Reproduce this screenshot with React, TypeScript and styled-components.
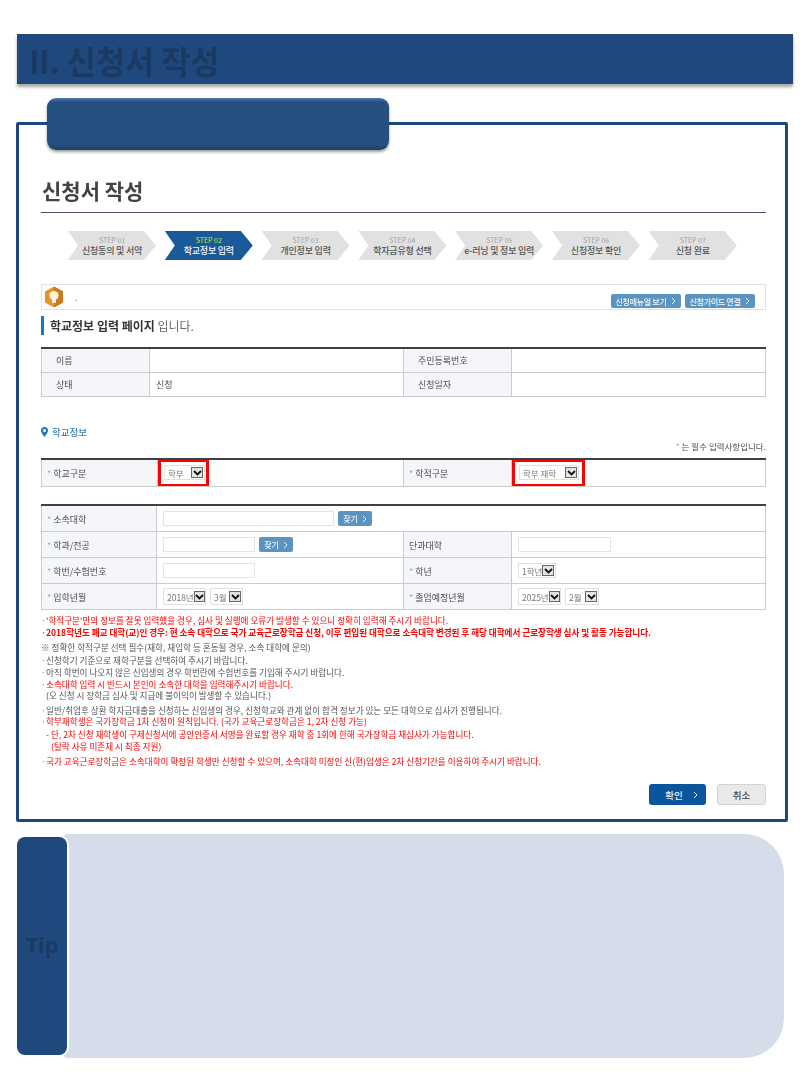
import styled, { createGlobalStyle } from 'styled-components';

const colors = {
  navy: '#1f497d',
  navyText: '#1a3a63',
  pill: '#25507f',
  rule: '#4d4a6b',
  line: '#cccccc',
  headerLine: '#3f4045',
  labelBg: '#f5f6f9',
  text: '#4d4d4d',
  red: '#ff0000',
  link: '#5a94c3',
};

const GlobalStyle = createGlobalStyle`
  html, body {
    margin: 0;
    padding: 0;
    background: #fff;
    font-family: "Noto Sans CJK KR", "Noto Sans", sans-serif;
    color: ${colors.text};
  }
`;

const steps = [
  { no: 'STEP 01', label: '신청동의 및 서약' },
  { no: 'STEP 02', label: '학교정보 입력', active: true },
  { no: 'STEP 03', label: '개인정보 입력' },
  { no: 'STEP 04', label: '학자금유형 선택' },
  { no: 'STEP 05', label: 'e-러닝 및 정보 입력' },
  { no: 'STEP 06', label: '신청정보 확인' },
  { no: 'STEP 07', label: '신청 완료' },
];

type NoteItem = { text: string; tone?: 'dark' | 'red' | 'bold'; top: number; indent?: number; dot?: boolean };

const notes: NoteItem[] = [
  { text: "'학적구분'만의 정보를 잘못 입력했을 경우, 심사 및 실행에 오류가 발생할 수 있으니 정확히 입력해 주시기 바랍니다.", tone: 'red', top: 0, dot: true },
  { text: '2018학년도 폐교 대학(교)인 경우: 현 소속 대학으로 국가 교육근로장학금 신청, 이후 편입된 대학으로 소속대학 변경된 후 해당 대학에서 근로장학생 심사 및 활동 가능합니다.', tone: 'bold', top: 0, dot: true },
  { text: '※ 정확한 학적구분 선택 필수(재학, 재입학 등 혼동될 경우, 소속 대학에 문의)', top: 3, indent: -5 },
  { text: '신청학기 기준으로 재학구분을 선택하여 주시기 바랍니다.', top: 1, dot: true },
  { text: '아직 학번이 나오지 않은 신입생의 경우 학번란에 수험번호를 기입해 주시기 바랍니다.', top: 0, dot: true },
  { text: '소속대학 입력 시 반드시 본인이 소속한 대학을 입력해주시기 바랍니다.', tone: 'red', top: 0, dot: true },
  { text: '(오 신청 시 장학금 심사 및 지급에 불이익이 발생할 수 있습니다.)', top: -1 },
  { text: '일반/취업후 상환 학자금대출을 신청하는 신입생의 경우, 신청학교와 관계 없이 합격 정보가 있는 모든 대학으로 심사가 진행됩니다.', top: 3, dot: true },
  { text: '학부재학생은 국가장학금 1차 신청이 원칙입니다. (국가 교육근로장학금은 1, 2차 신청 가능)', tone: 'red', top: -1, dot: true },
  { text: '- 단, 2차 신청 재학생이 구제신청서에 공인인증서 서명을 완료할 경우 재학 중 1회에 한해 국가장학금 재심사가 가능합니다.', tone: 'red', top: 1 },
  { text: '(탈락 사유 미존재 시 최종 지원)', tone: 'red', top: 0, indent: 5 },
  { text: '국가 교육근로장학금은 소속대학이 확정된 학생만 신청할 수 있으며, 소속대학 미정인 신(편)입생은 2차 신청기간을 이용하여 주시기 바랍니다.', tone: 'red', top: 3, dot: true },
];

function Select({ label, width, tall }: { label: string; width: number; tall?: boolean }) {
  return (
    <SelectBox $width={width} $tall={tall}>
      <span>{label}</span>
      <SelectArrow>
        <svg width="9" height="6" viewBox="0 0 9 6">
          <path d="M1 1l3.5 3.5L8 1" fill="none" stroke="#111" strokeWidth="1.8" />
        </svg>
      </SelectArrow>
    </SelectBox>
  );
}

function FindButton({ label }: { label: string }) {
  return (
    <SmallButton>
      {label}
      <Chevron />
    </SmallButton>
  );
}

function Chevron() {
  return (
    <svg width="5" height="8" viewBox="0 0 5 8">
      <path d="M1 1l3 3-3 3" fill="none" stroke="currentColor" strokeWidth="1" />
    </svg>
  );
}

export default function App() {
  return (
    <Page>
      <GlobalStyle />
      <HeaderBar>II. 신청서 작성</HeaderBar>
      <Pill />
      <Panel>
        <PageTitle>신청서 작성</PageTitle>
        <Steps>
          {steps.map((s) => (
            <Step key={s.no} $active={s.active}>
              <StepNo $active={s.active}>{s.no}</StepNo>
              <StepLabel $active={s.active}>{s.label}</StepLabel>
            </Step>
          ))}
        </Steps>

        <NoticeBox>
          <svg width="20" height="22" viewBox="0 0 20 22">
            <path d="M10 0.5l9 5v11l-9 5-9-5v-11z" fill="#e8922a" />
            <path d="M10 0.5l9 5v11l-9 5z" fill="#c9791f" />
            <circle cx="10" cy="9.5" r="4.6" fill="#fff3da" />
            <rect x="8" y="13" width="4" height="4" fill="#fff3da" />
          </svg>
          <NoticeDot>.</NoticeDot>
          <NoticeLinks>
            <NoticeButton>
              신청매뉴얼 보기
              <Chevron />
            </NoticeButton>
            <NoticeButton>
              신청가이드 연결
              <Chevron />
            </NoticeButton>
          </NoticeLinks>
        </NoticeBox>

        <SectionHeading>
          <b>학교정보 입력 페이지</b> 입니다.
        </SectionHeading>

        <InfoTable>
          <colgroup>
            <col width="108" />
            <col width="254" />
            <col width="108" />
            <col />
          </colgroup>
          <tbody>
            <tr>
              <th>이름</th>
              <td />
              <th>주민등록번호</th>
              <td />
            </tr>
            <tr>
              <th>상태</th>
              <td>신청</td>
              <th>신청일자</th>
              <td />
            </tr>
          </tbody>
        </InfoTable>

        <SubHeading>
          <svg width="7" height="10" viewBox="0 0 7 10">
            <path d="M3.5 0a3.5 3.5 0 0 1 3.5 3.5C7 6 3.5 10 3.5 10S0 6 0 3.5A3.5 3.5 0 0 1 3.5 0z" fill="#2a76b8" />
            <circle cx="3.5" cy="3.6" r="1.5" fill="#fff" />
          </svg>
          학교정보
        </SubHeading>
        <RequiredNote>
          <Star>*</Star> 는 필수 입력사항입니다.
        </RequiredNote>

        <FormTable $rowHeight={27}>
          <colgroup>
            <col width="116" />
            <col width="246" />
            <col width="108" />
            <col />
          </colgroup>
          <tbody>
            <tr>
              <FormLabel><Star>*</Star> 학교구분</FormLabel>
              <td>
                <Highlight>
                  <Select label="학부" width={41} />
                </Highlight>
              </td>
              <FormLabel><Star>*</Star> 학적구분</FormLabel>
              <td>
                <Highlight>
                  <Select label="학부 재학" width={60} />
                </Highlight>
              </td>
            </tr>
          </tbody>
        </FormTable>

        <FormTable $rowHeight={26} $gap>
          <colgroup>
            <col width="115" />
            <col width="247" />
            <col width="108" />
            <col />
          </colgroup>
          <tbody>
            <tr>
              <FormLabel><Star>*</Star> 소속대학</FormLabel>
              <td colSpan={3}>
                <FieldRow>
                  <TextInput $width={171} />
                  <FindButton label="찾기" />
                </FieldRow>
              </td>
            </tr>
            <tr>
              <FormLabel><Star>*</Star> 학과/전공</FormLabel>
              <td>
                <FieldRow>
                  <TextInput $width={92} />
                  <FindButton label="찾기" />
                </FieldRow>
              </td>
              <FormLabel>단과대학</FormLabel>
              <td>
                <TextInput $width={93} />
              </td>
            </tr>
            <tr>
              <FormLabel><Star>*</Star> 학번/수험번호</FormLabel>
              <td>
                <TextInput $width={92} />
              </td>
              <FormLabel><Star>*</Star> 학년</FormLabel>
              <td>
                <Select label="1학년" width={38} />
              </td>
            </tr>
            <tr>
              <FormLabel><Star>*</Star> 입학년월</FormLabel>
              <td>
                <FieldRow>
                  <Select label="2018년" width={43} tall />
                  <Select label="3월" width={33} tall />
                </FieldRow>
              </td>
              <FormLabel><Star>*</Star> 졸업예정년월</FormLabel>
              <td>
                <FieldRow>
                  <Select label="2025년" width={43} tall />
                  <Select label="2월" width={34} tall />
                </FieldRow>
              </td>
            </tr>
          </tbody>
        </FormTable>

        <Notes>
          {notes.map((n) => (
            <Note key={n.text} $tone={n.tone} $top={n.top} $indent={n.indent} $dot={n.dot}>
              {n.text}
            </Note>
          ))}
        </Notes>

        <Actions>
          <ConfirmButton>
            확인
            <Chevron />
          </ConfirmButton>
          <CancelButton>취소</CancelButton>
        </Actions>
      </Panel>

      <TipWrap>
        <TipTab>Tip</TipTab>
        <TipBody />
      </TipWrap>
    </Page>
  );
}

const Page = styled.div`
  width: 810px;
  height: 1080px;
  overflow: hidden;
  padding: 34px 0 0 17px;
  box-sizing: border-box;
  filter: blur(0.35px);
`;

const HeaderBar = styled.div`
  width: 776px;
  height: 50px;
  box-sizing: border-box;
  padding-left: 12px;
  background: ${colors.navy};
  box-shadow: 0 3px 3px rgb(0 0 0 / 35%);
  color: ${colors.navyText};
  font-size: 32px;
  font-weight: 700;
  line-height: 53px;
  letter-spacing: -0.3px;
`;

const Pill = styled.div`
  position: relative;
  z-index: 1;
  width: 342px;
  height: 52px;
  margin: 14px 0 -28px 30px;
  border-radius: 9px;
  background: linear-gradient(#4d7bb0 0, ${colors.pill} 4px, ${colors.pill} 46px, #1d3f66 100%);
  box-shadow: 0 2px 3px rgb(0 0 0 / 40%);
`;

const Panel = styled.div`
  width: 772px;
  height: 700px;
  margin-left: -1px;
  box-sizing: border-box;
  padding: 50px 19px 0 22px;
  border: 3px solid ${colors.navy};
  border-radius: 2px;
`;

const PageTitle = styled.h1`
  margin: 0;
  height: 37px;
  padding-left: 1px;
  border-bottom: 1px solid ${colors.rule};
  color: #444;
  font-size: 21px;
  line-height: 30px;
  font-weight: 700;
`;

const Steps = styled.div`
  display: flex;
  gap: 8.8px;
  margin: 18px 0 0 27px;
`;

const Step = styled.div<{ $active?: boolean }>`
  width: 88px;
  height: 29px;
  flex: none;
  display: flex;
  flex-direction: column;
  align-items: center;
  justify-content: center;
  background: ${(p) => (p.$active ? '#1b5a9a' : '#e1e1e1')};
  clip-path: polygon(0 0, 76px 0, 100% 50%, 76px 100%, 0 100%, 10px 50%);
  white-space: nowrap;
`;

const StepNo = styled.div<{ $active?: boolean }>`
  font-size: 7px;
  line-height: 9px;
  color: ${(p) => (p.$active ? '#c6e33a' : '#a5a5a5')};
`;

const StepLabel = styled.div<{ $active?: boolean }>`
  font-size: 9px;
  line-height: 11px;
  letter-spacing: -0.2px;
  font-weight: 500;
  color: ${(p) => (p.$active ? '#f2f6fa' : '#555')};
`;

const NoticeBox = styled.div`
  display: flex;
  align-items: center;
  height: 26px;
  margin-top: 24px;
  padding: 0 10px 0 2px;
  box-sizing: border-box;
  border: 1px solid #e2e2e2;
`;

const NoticeDot = styled.span`
  margin-left: 11px;
  font-size: 9px;
  color: #777;
`;

const NoticeLinks = styled.div`
  display: flex;
  gap: 4px;
  margin-left: auto;
  padding-top: 8px;
`;

const SmallButton = styled.button`
  display: inline-flex;
  align-items: center;
  justify-content: center;
  gap: 4px;
  width: 34px;
  height: 15px;
  padding: 0;
  border: 0;
  border-radius: 2px;
  background: ${colors.link};
  color: #f0f5fa;
  font: 500 8px "Noto Sans CJK KR", sans-serif;
`;

const NoticeButton = styled(SmallButton)`
  width: 70px;
  height: 14px;
  gap: 5px;
  letter-spacing: -0.3px;
`;

const SectionHeading = styled.div`
  height: 19px;
  margin-top: 6px;
  padding-left: 6px;
  border-left: 3px solid #1878c8;
  color: #666;
  font-size: 12px;
  line-height: 19px;
  b {
    color: #333;
  }
`;

const InfoTable = styled.table`
  width: 725px;
  margin-top: 12px;
  table-layout: fixed;
  border-collapse: collapse;
  border-top: 2px solid ${colors.headerLine};
  font-size: 9px;
  th,
  td {
    height: 23px;
    padding: 0;
    border: 1px solid ${colors.line};
    line-height: 12px;
    font-weight: 400;
  }
  th {
    padding-left: 14px;
    background: ${colors.labelBg};
    text-align: left;
  }
  td {
    padding-left: 6px;
  }
`;

const SubHeading = styled.div`
  display: flex;
  align-items: center;
  gap: 4px;
  margin-top: 28px;
  height: 14px;
  color: #3b7db5;
  font-size: 9.5px;
  font-weight: 500;
`;

const RequiredNote = styled.div`
  margin-top: 1px;
  height: 13px;
  line-height: 13px;
  text-align: right;
  font-size: 8.5px;
`;

const Star = styled.span`
  color: #7fb2e0;
`;

const FormTable = styled.table<{ $rowHeight: number; $gap?: boolean }>`
  width: 725px;
  margin-top: ${(p) => (p.$gap ? '17px' : '5px')};
  table-layout: fixed;
  border-collapse: collapse;
  border-top: 2px solid ${colors.headerLine};
  font-size: 9px;
  th,
  td {
    height: ${(p) => p.$rowHeight - 1}px;
    padding: 0;
    border: 1px solid ${colors.line};
  }
  td {
    padding-left: 6px;
  }
  th {
    padding-top: ${(p) => (p.$gap ? 2 : 0)}px;
    height: ${(p) => p.$rowHeight - (p.$gap ? 3 : 1)}px;
  }
`;

const FormLabel = styled.th`
  padding-left: 5px !important;
  background: ${colors.labelBg};
  text-align: left;
  font-weight: 400;
  white-space: nowrap;
`;

const Highlight = styled.div`
  display: flex;
  align-items: center;
  width: 51px;
  height: 28px;
  margin: -2px 0 -1px -6px;
  padding-left: 3px;
  box-sizing: border-box;
  border: 3px solid ${colors.red};
  border-radius: 1px;
  td:last-child > & {
    width: 73px;
    padding-left: 4px;
  }
`;

const SelectBox = styled.div<{ $width: number; $tall?: boolean }>`
  display: flex;
  align-items: center;
  justify-content: space-between;
  flex: none;
  width: ${(p) => p.$width}px;
  height: ${(p) => (p.$tall ? 17 : 15)}px;
  box-sizing: border-box;
  padding: 0 1px 0 3px;
  border: 1px solid #e0e0e0;
  color: #777;
  font-size: 8.5px;
  white-space: nowrap;
`;

const SelectArrow = styled.span`
  display: inline-flex;
  align-items: center;
  justify-content: center;
  width: 12px;
  height: 11px;
  box-sizing: border-box;
  border: 1px solid #666;
  background: #e4e4e4;
`;

const FieldRow = styled.div`
  display: flex;
  align-items: center;
  gap: 4px;
`;

const TextInput = styled.div<{ $width: number }>`
  width: ${(p) => p.$width}px;
  height: 15px;
  box-sizing: border-box;
  border: 1px solid #e4e4e4;
`;

const Notes = styled.div`
  margin-top: 4px;
`;

const Note = styled.div<{ $tone?: string; $top: number; $indent?: number; $dot?: boolean }>`
  position: relative;
  margin-top: ${(p) => p.$top}px;
  padding-left: ${(p) => 5 + (p.$indent ?? 0)}px;
  color: ${(p) => (p.$tone === 'red' || p.$tone === 'bold' ? colors.red : '#555')};
  font-size: 8.6px;
  font-weight: ${(p) => (p.$tone === 'bold' ? 700 : 400)};
  line-height: 12px;
  letter-spacing: ${(p) => (p.$tone === 'bold' ? '-0.03px' : '0')};
  white-space: nowrap;
  &::before {
    content: ${(p) => (p.$dot ? '"·"' : 'none')};
    position: absolute;
    left: 0;
    color: #777;
  }
`;

const Actions = styled.div`
  display: flex;
  justify-content: flex-end;
  gap: 11px;
  margin-top: 17px;
`;

const ConfirmButton = styled.button`
  display: flex;
  align-items: center;
  justify-content: center;
  gap: 10px;
  width: 57px;
  height: 21px;
  padding: 0 0 0 8px;
  border: 0;
  border-radius: 3px;
  background: #0b559f;
  color: #e8f0f8;
  font: 500 9.5px "Noto Sans CJK KR", sans-serif;
`;

const CancelButton = styled.button`
  width: 49px;
  height: 21px;
  padding: 0;
  border: 1px solid #d2d2d2;
  border-radius: 3px;
  background: #e9e9e9;
  color: #444;
  font: 500 9.5px "Noto Sans CJK KR", sans-serif;
`;

const TipWrap = styled.div`
  display: flex;
  align-items: center;
  width: 767px;
  margin-top: 12px;
`;

const TipTab = styled.div`
  position: relative;
  z-index: 1;
  display: flex;
  align-items: center;
  justify-content: center;
  flex: none;
  width: 50px;
  height: 218px;
  margin-right: -5px;
  padding-bottom: 4px;
  box-sizing: border-box;
  border-radius: 8px;
  background: ${colors.navy};
  box-shadow: 0 0 0 2px #fff;
  color: ${colors.navyText};
  font: 700 22px "Noto Sans", sans-serif;
`;

const TipBody = styled.div`
  flex: 1;
  height: 224px;
  background: #d5dcea;
  border-radius: 6px 40px 40px 6px;
`;
